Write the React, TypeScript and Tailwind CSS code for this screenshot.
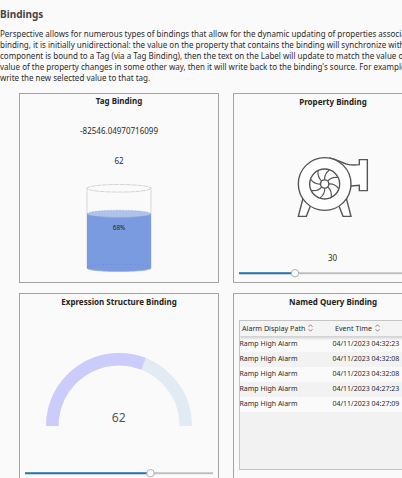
import type { ReactNode } from "react";

const PARAGRAPH = [
  "Perspective allows for numerous types of bindings that allow for the dynamic updating of properties associated",
  "binding, it is initially unidirectional: the value on the property that contains the binding will synchronize with",
  "component is bound to a Tag (via a Tag Binding), then the text on the Label will update to match the value of",
  "value of the property changes in some other way, then it will write back to the binding's source. For example,",
  "write the new selected value to that tag.",
];

const ALARMS = [
  "04/11/2023 04:32:23",
  "04/11/2023 04:32:08",
  "04/11/2023 04:32:08",
  "04/11/2023 04:27:23",
  "04/11/2023 04:27:09",
];

function Card({ title, className, children }: { title: string; className: string; children: ReactNode }) {
  return (
    <section className={`flex flex-col w-[200px] shrink-0 border border-[#a4a4a4] ${className}`}>
      <h2 className="text-center text-[8px] leading-[11px] font-bold text-[#222]">{title}</h2>
      {children}
    </section>
  );
}

function Slider({ value, width }: { value: number; width: number }) {
  return (
    <svg className="block h-[10px] shrink-0" style={{ width }} viewBox={`0 0 ${width} 10`}>
      <rect x="0" y="4.300" width={width} height="1.900" fill="#bdbdbd" />
      <rect x="0" y="4.300" width={value} height="1.900" fill="#1f77b4" />
      <circle cx={value} cy="5.200" r="3.700" fill="#fafafa" stroke="#a8a8a8" strokeWidth=".9" />
    </svg>
  );
}

function Tank() {
  return (
    <svg className="block mx-auto w-[66px] h-[90px]" viewBox="0 0 66 90" fill="none">
      <path d="M1 6V86M65 6V86" stroke="#d0d0d0" strokeWidth=".8" />
      <ellipse cx="33" cy="6.300" rx="32" ry="3.800" stroke="#b8b8b8" strokeWidth=".6" strokeDasharray="5 .8" />
      <path d="M1 32V86C1 90.700 65 90.700 65 86V32Z" fill="#7a9be0" />
      <ellipse cx="33" cy="31.800" rx="32" ry="3.600" fill="#aec2ea" />
      <path d="M1 31.800C1 27 65 27 65 31.800" stroke="#8fa3cf" strokeWidth=".5" strokeDasharray="1.500 1.500" />
      <path d="M1 31.800C1 36.600 65 36.600 65 31.800" stroke="#8ea0c8" strokeWidth=".5" />
      <path d="M1 86C1 81 65 81 65 86" stroke="#6681bd" strokeWidth=".45" strokeDasharray="2 2" />
      <path d="M1 86C1 90.700 65 90.700 65 86" stroke="#9aacd4" strokeWidth=".6" />
      <text x="33" y="48.200" textAnchor="middle" fontSize="6.300" fill="#222">68%</text>
    </svg>
  );
}

function Blower() {
  return (
    <svg className="block ml-[56px] w-[85px] h-[75px]" viewBox="0 0 255 225" fill="#fff" stroke="#555" strokeWidth="4.200">
      <path d="M39 145L25 199H49L61 168M169 145L183 199H159L147 168" />
      <path d="M118 24C152 29 160 50 208 44V29H232V122H208V106L183 108" />
      <circle cx="104" cy="102" r="79" />
      <circle cx="104" cy="102" r="45" />
      <circle cx="104" cy="102" r="12.500" />
      <g fill="none" strokeWidth="3.500">
        {[0, 45, 90, 135, 180, 225, 270, 315].map((angle) => (
          <path key={angle} d="M104 89C103 78 108 68 118 60" transform={`rotate(${angle} 104 102)`} />
        ))}
      </g>
    </svg>
  );
}

function Gauge() {
  return (
    <svg className="block mx-auto w-[150px] h-[80px]" viewBox="0 0 150 80">
      <path d="M8.300 75A66.700 66.700 0 0 1 141.700 75" fill="none" stroke="#e2ebf3" strokeWidth="12.500" />
      <path d="M8.300 75A66.700 66.700 0 0 1 99.500 12.900" fill="none" stroke="#ccccfc" strokeWidth="12.500" />
      <text x="74.700" y="70.500" textAnchor="middle" fontSize="12.200" fill="#555">62</text>
    </svg>
  );
}

function Sort() {
  return (
    <svg className="w-[5px] h-[8px]" viewBox="0 0 5 8" fill="none" stroke="#777" strokeWidth=".9">
      <path d="M.5 2.800L2.500 .8L4.500 2.800M.5 5.200L2.500 7.200L4.500 5.200" />
    </svg>
  );
}

export default function App() {
  return (
    <main className="w-[402px] h-[478px] overflow-hidden bg-[#fafafa] text-[#2b2b2b] font-['Noto_Sans',sans-serif]">
      <h1 className="pt-[7px] text-[10px] leading-[14px] font-bold text-[#444]">Bindings</h1>
      <div className="mt-[7px] h-[55px] text-[8px] leading-[11px] whitespace-nowrap">
        {PARAGRAPH.map((line) => (
          <p key={line}>{line}</p>
        ))}
      </div>

      <div className="mt-[10px] ml-[19px] grid w-[414px] grid-cols-[200px_200px] grid-rows-[190px_200px] gap-x-[14px] gap-y-[10px]">
        <Card title="Tag Binding" className="pt-[1px]">
          <p className="mt-[19px] text-center text-[8px] leading-[11px]">-82546.04970716099</p>
          <p className="mt-[19px] text-center text-[8px] leading-[11px]">62</p>
          <div className="mt-[16px]">
            <Tank />
          </div>
        </Card>

        <Card title="Property Binding" className="pt-[2px]">
          <div className="mt-[43px]">
            <Blower />
          </div>
          <p className="mt-[27px] pr-[1px] text-center text-[8px] leading-[11px]">30</p>
          <div className="mt-[5px] ml-[5px]">
            <Slider value={56} width={188} />
          </div>
        </Card>

        <Card title="Expression Structure Binding" className="pt-[2px]">
          <div className="mt-[44px]">
            <Gauge />
          </div>
          <div className="mt-[37px] ml-[5px]">
            <Slider value={125.500} width={188} />
          </div>
        </Card>

        <Card title="Named Query Binding" className="pt-[2px]">
          <div className="mt-[13px] ml-[5px] h-[150px] w-[188px] overflow-hidden border border-[#c4c4c4] bg-[#f2f2f2] text-[7px] whitespace-nowrap">
            <div className="relative flex h-[15.5px] items-center border-b border-[#d4d4d4] bg-[#f4f4f4] text-[7.15px] shadow-[0_1px_3px_#0003]">
              <div className="flex w-[93px] items-center gap-[3px] pl-[2px]">
                Alarm Display Path <Sort />
              </div>
              <div className="flex items-center gap-[3px] pl-[2px]">
                Event Time <Sort />
              </div>
            </div>
            {ALARMS.map((time, i) => (
              <div key={i} className="flex h-[15px] items-center odd:bg-[#f2f2f2] even:bg-[#fafafa]">
                <span className="-ml-[0.5px] w-[93px]">Ramp High Alarm</span>
                <span>{time}</span>
              </div>
            ))}
          </div>
        </Card>
      </div>
    </main>
  );
}
